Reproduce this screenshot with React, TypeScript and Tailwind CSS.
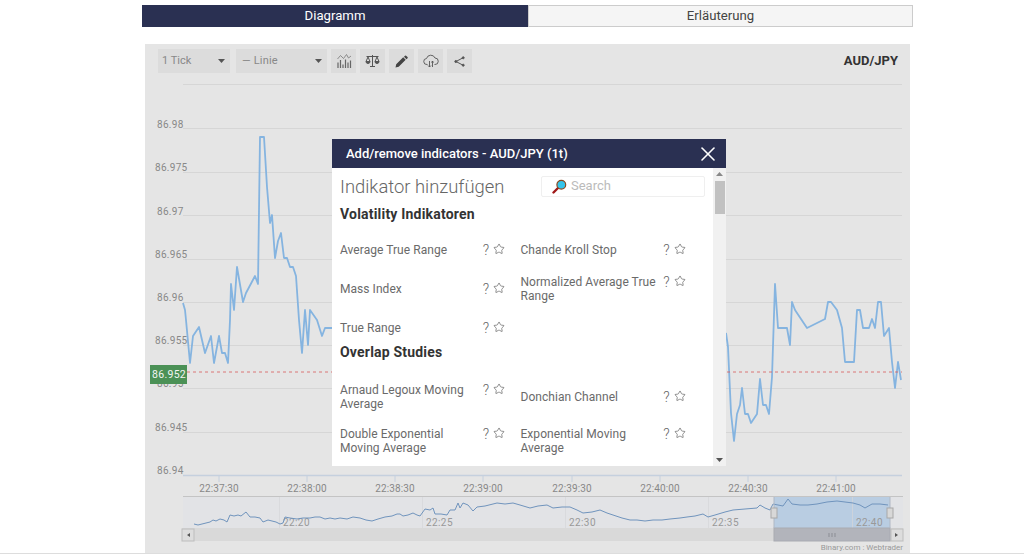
import { Star, X } from "lucide-react";

const line1 = "183,303 185,310 186,320 190,363 193,336 199,327 205,353 211,336 214,363 219,336 222,353 225,353 228,363 230,320 231,284 234,310 237,267 243,302 246,293 255,276 258,284 260,137 264,137 267,187 270,223 272,215 275,258 278,241 281,233 284,258 287,258 290,267 293,267 296,276 299,320 302,353 305,310 308,345 310,310 317,320 322,336 325,328 332,328";
const line2 = "726,333 728,347 731,413 734,441 737,414 740,405 742,388 745,414 748,414 751,423 757,414 760,379 763,405 766,405 769,414 772,377 775,284 778,328 787,328 790,345 792,302 795,310 807,328 825,319 828,302 831,302 837,310 842,328 845,362 854,362 857,310 860,310 863,328 869,328 872,319 875,328 878,302 881,302 884,336 889,328 892,362 895,388 898,362 901,380";
const nav = "194,524 198,525 202,524 206,523 210,522 213,520 216,521 220,519 224,520 227,522 230,515 234,516 238,515 241,516 246,512 250,517 255,517 260,518 263,522 268,520 272,521 276,522 280,524 283,523 285,517 290,518 297,519 303,518 310,518 315,517 320,517 325,519 330,518 335,519 340,518 347,519 353,517 360,518 366,520 372,521 378,519 385,517 392,516 397,514 400,514 403,516 408,515 413,513 417,515 420,516 425,509 430,510 433,508 435,514 441,514 447,515 450,510 455,510 458,503 460,508 463,503 468,505 473,511 477,507 485,506 493,504 497,503 505,504 513,503 520,505 530,508 538,506 547,505 553,508 562,507 570,507 577,510 583,513 592,512 600,510 607,513 613,515 622,518 630,520 637,520 645,521 653,520 662,520 670,519 680,518 687,517 695,516 703,514 708,517 715,515 725,512 733,510 745,509 757,508 760,505 765,508 770,510 773,504 778,505 783,506 788,499 792,504 800,505 808,505 817,504 827,502 837,501 845,502 853,503 860,505 865,508 872,504 880,504 888,505";

const grid = [84, 128, 172, 215, 259, 302, 345, 388, 432];
const yLabels: [string, number, number][] = [
  ["86.98", 157, 127.5], ["86.975", 155, 171], ["86.97", 157, 214.5], ["86.965", 155, 258],
  ["86.96", 157, 300.5], ["86.955", 155, 344], ["86.95", 157, 387], ["86.945", 155, 430.5], ["86.94", 157, 474],
];
const ticks: [string, number][] = [
  ["22:37:30", 219], ["22:38:00", 307], ["22:38:30", 395], ["22:39:00", 483],
  ["22:39:30", 572], ["22:40:00", 660], ["22:40:30", 748], ["22:41:00", 836],
];
const navTicks: [string, number][] = [["22:20", 279], ["22:25", 422], ["22:30", 565], ["22:35", 708], ["22:40", 852]];

function Caret() {
  return <svg width="7" height="4" viewBox="0 0 7 4"><path d="M0 0h7L3.5 4z" fill="#555" /></svg>;
}

function ToolButton({ children }: { children: React.ReactNode }) {
  return <div className="w-[25px] h-[24px] bg-[#dcdcdc] flex items-center justify-center">{children}</div>;
}

function Indicator({ name }: { name: string }) {
  return (
    <div className="flex items-center">
      <div className="flex items-start">
        <div className="w-[140px] pr-[2px] text-[12px] leading-[14px] tracking-[0.05px] text-[#6a6a6a]">{name}</div>
        <div className="w-[12px] text-center text-[14px] leading-[14px] font-light text-[#666]">?</div>
        <Star size={12} strokeWidth={1.3} className="ml-[1px] text-[#555]" />
      </div>
    </div>
  );
}

export default function App() {
  return (
    <div className="w-[1024px] h-[554px] overflow-hidden bg-white flex flex-col border-b border-[#dddddd] font-['Roboto',sans-serif]">
      <div className="mt-[5px] ml-[142px] w-[771px] h-[22px] flex text-[13.2px]">
        <div className="w-[386px] bg-[#2a3052] text-white flex items-center justify-center">Diagramm</div>
        <div className="flex-1 bg-[#f5f5f5] border border-[#cccccc] text-[#444] flex items-center justify-center">Erläuterung</div>
      </div>

      <div className="relative mt-[17px] ml-[145px] w-[765px] flex-1 bg-[#e5e5e5] flex flex-col">
        <div className="h-[33px] pt-[5px] pl-[13px] pr-[12px] flex items-start gap-[6px] shrink-0">
          <div className="w-[72px] h-[24px] bg-[#dcdcdc] pl-[4px] pr-[5px] flex items-center justify-between text-[11px] text-[#888]">
            <span>1 Tick</span><Caret />
          </div>
          <div className="w-[91px] h-[24px] bg-[#dcdcdc] pl-[6px] pr-[5px] flex items-center justify-between text-[11px] tracking-[0.2px] text-[#888] mr-[-2px]">
            <span>— Linie</span><Caret />
          </div>
          <div className="flex gap-[4px]">
            <ToolButton>
              <svg width="16" height="16" viewBox="0 0 16 16" fill="none" stroke="#777" strokeWidth="0.8">
                <path d="M1.500 6l3-3.500 3 3 3-4 2 3.500 2.500-2" />
                <path d="M2 15V9.500M4.500 15V7M7 15v-3.500M9.500 15V6.500M12 15V9.500M14.500 15V7.500" strokeWidth="1.200" stroke="#666" />
              </svg>
            </ToolButton>
            <ToolButton>
              <svg width="15" height="14" viewBox="0 0 15 14" fill="none" stroke="#555" strokeWidth="1">
                <path d="M7.500 1v11M1.500 2.500h12M5 12.500h5" />
                <path d="M3 3L1 7.500h4L3 3zM12 3l-2 4.500h4L12 3z" />
                <path d="M1 7.500a2 2 0 0 0 4 0zM10 7.500a2 2 0 0 0 4 0z" fill="#555" />
              </svg>
            </ToolButton>
            <ToolButton>
              <svg width="13" height="13" viewBox="0 0 13 13"><path d="M0.500 12.500l0.700-3.200 7-7 2.500 2.500-7 7zM9 1.700l1-1a0.800 0.800 0 0 1 1.100 0l1.400 1.400a0.800 0.800 0 0 1 0 1.100l-1 1z" fill="#444" /></svg>
            </ToolButton>
            <ToolButton>
              <svg width="16" height="15" viewBox="0 0 16 15" fill="none" stroke="#555" strokeWidth="0.9">
                <path d="M4.500 10.500H4a3 3 0 0 1-.5-6A4.500 4.500 0 0 1 12 4a3.200 3.200 0 0 1 0 6.500h-.5" />
                <path d="M6.500 7v6M5 11.500L6.500 13 8 11.500M9.500 7v6M8.500 8.500l1-1.500 1 1.500" />
              </svg>
            </ToolButton>
            <ToolButton>
              <svg width="11" height="11" viewBox="0 0 11 11" fill="none" stroke="#555" strokeWidth="1">
                <path d="M9 1.800L2 5.500 9 9.200" />
                <circle cx="9.200" cy="1.800" r="1" fill="#555" />
                <circle cx="1.800" cy="5.500" r="1" fill="#555" />
                <circle cx="9.200" cy="9.200" r="1" fill="#555" />
              </svg>
            </ToolButton>
          </div>
          <div className="ml-auto self-center mt-[-4px] text-[13px] font-bold text-[#333]">AUD/JPY</div>
        </div>

        <svg className="block flex-1 w-[765px]" width="765" height="476" viewBox="145 77 765 476">
          {grid.map((y) => <line key={y} x1="183" x2="902" y1={y + 0.5} y2={y + 0.5} stroke="#d6d6d6" />)}
          {yLabels.map(([t, x, y]) => <text key={t} x={x} y={y} fontSize="10" letterSpacing="0.3" fill="#888">{t}</text>)}
          <polyline points={line1} fill="none" stroke="#85b4e0" strokeWidth="1.800" strokeLinejoin="round" />
          <polyline points={line2} fill="none" stroke="#85b4e0" strokeWidth="1.800" strokeLinejoin="round" />
          <line x1="187" x2="902" y1="372" y2="372" stroke="#d85a5a" strokeWidth="0.800" strokeDasharray="3 3" />
          <rect x="150" y="365" width="37" height="19" fill="#4b9156" />
          <text x="152" y="378" fontSize="10.500" letterSpacing="0.3" fill="#f2f5f2">86.952</text>

          <line x1="183" x2="902" y1="475.500" y2="475.500" stroke="#c5d0de" strokeWidth="1.500" />
          {ticks.map(([t, x]) => (
            <g key={t}>
              <line x1={x} x2={x} y1="475" y2="482" stroke="#c5d0de" />
              <text x={x} y="492" fontSize="10" letterSpacing="0.1" textAnchor="middle" fill="#888">{t}</text>
            </g>
          ))}

          <line x1="183" x2="903" y1="496.500" y2="496.500" stroke="#c4c4c4" strokeWidth="1.200" />
          <rect x="183" y="497" width="720" height="31" fill="#e2e3e6" />
          <rect x="774" y="497" width="116" height="31" fill="#b9cde2" />
          {navTicks.map(([t, x]) => (
            <g key={t}>
              <line x1={x + 0.5} x2={x + 0.5} y1="497" y2="528" stroke="#d6d6d8" strokeOpacity="0.7" />
              <text x={x + 4} y="526" fontSize="10" letterSpacing="0.4" fill="#999">{t}</text>
            </g>
          ))}
          <rect x="182" y="528" width="721" height="13" fill="#d9d9d9" />
          <rect x="182" y="529" width="12" height="12" fill="#dddddd" stroke="#bdbdbd" />
          <path d="M190 533v4l-3-2z" fill="#555" />
          <rect x="891" y="529" width="12" height="12" fill="#dddddd" stroke="#bdbdbd" />
          <path d="M895 533v4l3-2z" fill="#555" />

          <rect x="774" y="528" width="116" height="13" fill="#b2b4bb" stroke="#a9abb2" />
          <path d="M829 533v4M832 533v4M835 533v4" stroke="#8b8d94" />
          <polyline points={nav} fill="none" stroke="#7094bd" strokeWidth="1" strokeLinejoin="round" />
          <line x1="774" x2="774" y1="497" y2="528" stroke="#b0b8c4" />
          <line x1="890" x2="890" y1="497" y2="528" stroke="#b0b8c4" />
          <rect x="771" y="508" width="6" height="10" fill="#d8d8d8" stroke="#a8a8a8" />
          <rect x="887" y="508" width="6" height="10" fill="#d8d8d8" stroke="#a8a8a8" />
          <text x="903" y="550" fontSize="8" textAnchor="end" fill="#999">Binary.com : Webtrader</text>
        </svg>

        <div className="absolute left-[187px] top-[95px] w-[394px] h-[327px] bg-white flex flex-col overflow-hidden">
          <div className="h-[29px] shrink-0 bg-[#2a3052] pl-[14px] pr-[6px] flex items-center justify-between text-white text-[13px] font-medium">
            <span>Add/remove indicators - AUD/JPY (1t)</span>
            <X size={24} strokeWidth={1.6} />
          </div>
          <div className="flex-1 min-h-0 flex">
            <div className="flex-1 min-w-0 pl-[8px] overflow-hidden">
              <div className="h-[37px] flex items-start">
                <div className="mt-[8px] w-[201px] text-[18.400px] leading-[22px] font-light text-[#666]">Indikator hinzufügen</div>
                <div className="mt-[8px] w-[164px] h-[21px] border border-[#efefef] rounded-[2px] flex items-center pl-[10px] gap-[4px] text-[13px] leading-[13px] text-[#bbbbbb]">
                  <svg width="15" height="15" viewBox="0 0 15 15">
                    <path d="M6 9L1.500 13.500" stroke="#a01818" strokeWidth="2.400" strokeLinecap="round" />
                    <circle cx="9.300" cy="5.700" r="4.400" fill="#35c4ea" stroke="#8a4a20" strokeWidth="1.200" />
                  </svg>
                  <span className="mt-[-2px]">Search</span>
                </div>
              </div>
              <div className="text-[14px] leading-[18px] font-bold tracking-[0.2px] text-[#333] mb-[11px]">Volatility Indikatoren</div>
              <div className="grid grid-cols-[180.500px_180.500px]">
                <div className="py-[9px] flex"><Indicator name="Average True Range" /></div>
                <div className="py-[9px] flex"><Indicator name="Chande Kroll Stop" /></div>
                <div className="py-[9px] flex"><Indicator name="Mass Index" /></div>
                <div className="py-[9px] flex"><Indicator name="Normalized Average True Range" /></div>
                <div className="pt-[9px] pb-[8px] flex"><Indicator name="True Range" /></div>
                <div />
              </div>
              <div className="text-[14px] leading-[18px] font-bold tracking-[0.2px] text-[#333] mb-[14px]">Overlap Studies</div>
              <div className="grid grid-cols-[180.500px_180.500px]">
                <div className="py-[8px] flex"><Indicator name="Arnaud Legoux Moving Average" /></div>
                <div className="py-[8px] flex"><Indicator name="Donchian Channel" /></div>
                <div className="py-[8px] flex"><Indicator name="Double Exponential Moving Average" /></div>
                <div className="py-[8px] flex"><Indicator name="Exponential Moving Average" /></div>
              </div>
            </div>
            <div className="w-[13px] shrink-0 bg-[#f1f1f1] flex flex-col items-center">
              <svg className="mt-[4px] shrink-0" width="7" height="4" viewBox="0 0 7 4"><path d="M0 4h7L3.500 0z" fill="#888" /></svg>
              <div className="mt-[5px] w-[10px] h-[33px] bg-[#c1c1c1]" />
              <svg className="mt-auto mb-[4px] shrink-0" width="7" height="4" viewBox="0 0 7 4"><path d="M0 0h7L3.500 4z" fill="#555" /></svg>
            </div>
          </div>
        </div>
      </div>
    </div>
  );
}
